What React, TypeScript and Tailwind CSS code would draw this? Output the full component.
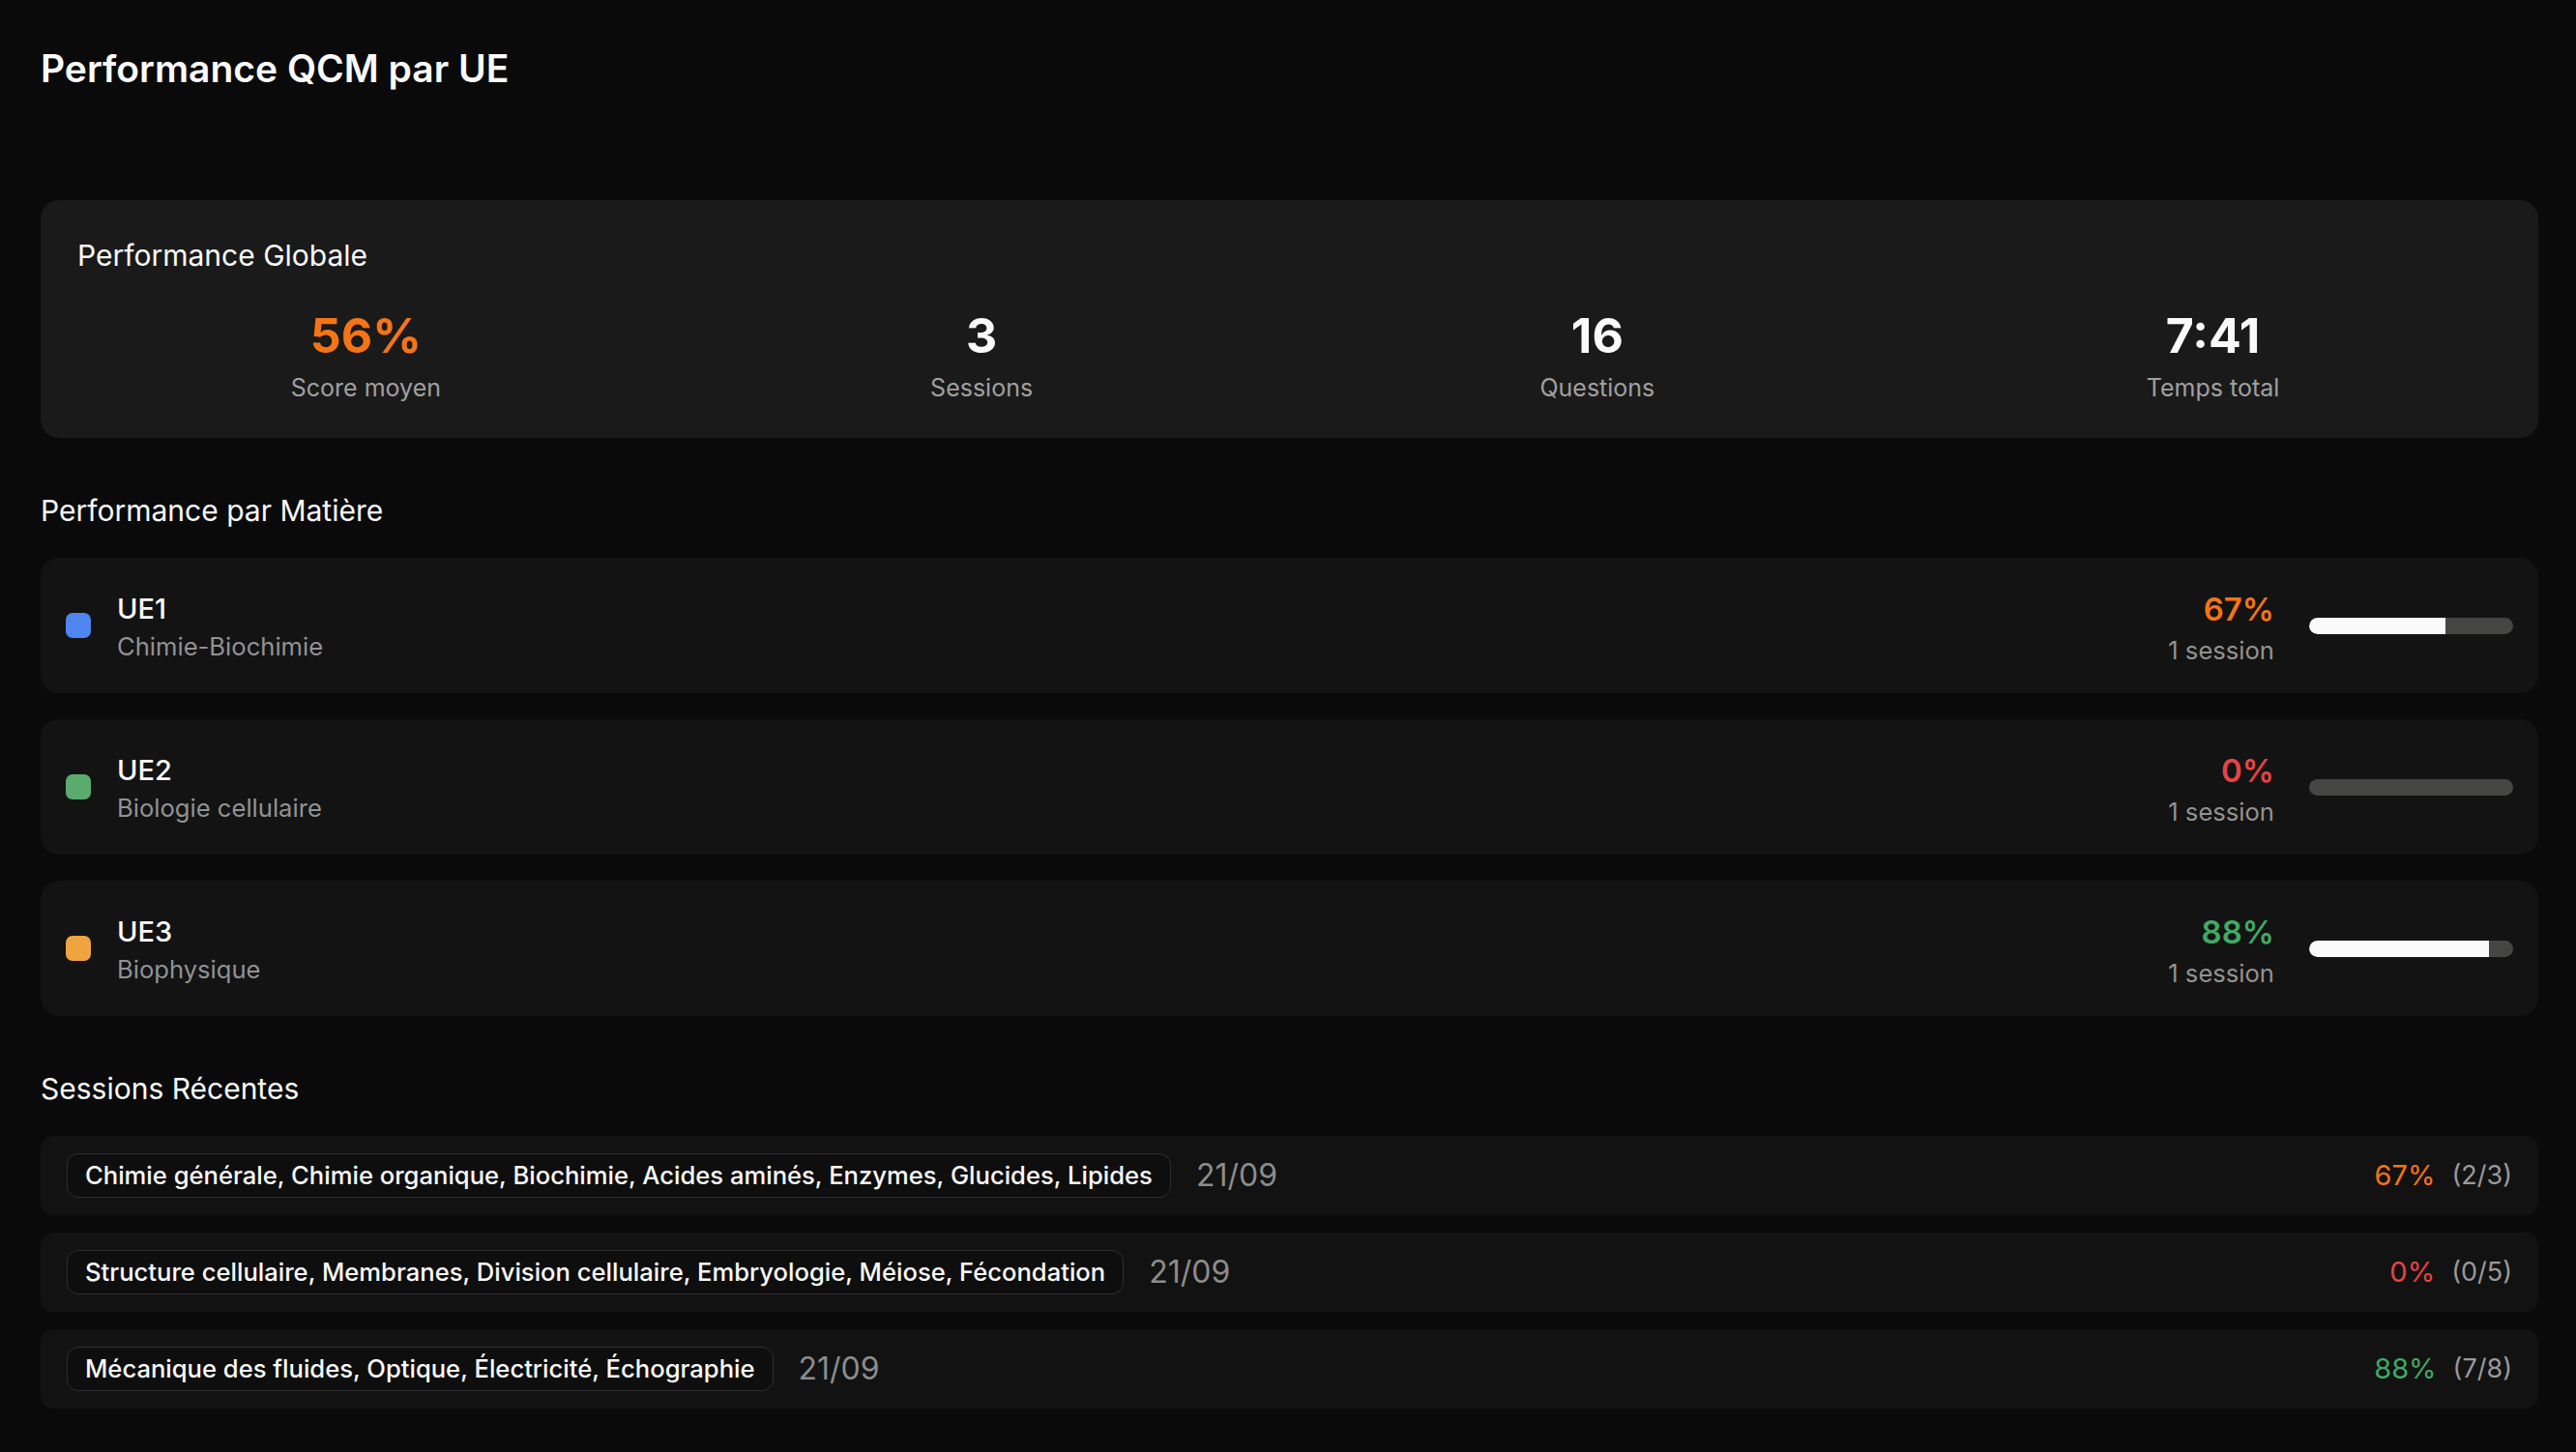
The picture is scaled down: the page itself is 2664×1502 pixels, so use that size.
import React from "react";

type Subject = { code: string; name: string; dot: string; pct: number; color: string; sessions: string };
type Session = { topics: string; date: string; pct: number; color: string; ratio: string };

const subjects: Subject[] = [
  { code: "UE1", name: "Chimie-Biochimie", dot: "bg-[#4e85ee]", pct: 67, color: "text-[#f47416]", sessions: "1 session" },
  { code: "UE2", name: "Biologie cellulaire", dot: "bg-[#5aab6e]", pct: 0, color: "text-[#e54444]", sessions: "1 session" },
  { code: "UE3", name: "Biophysique", dot: "bg-[#eea540]", pct: 88, color: "text-[#41a964]", sessions: "1 session" },
];

const sessions: Session[] = [
  { topics: "Chimie générale, Chimie organique, Biochimie, Acides aminés, Enzymes, Glucides, Lipides", date: "21/09", pct: 67, color: "text-[#f47416]", ratio: "(2/3)" },
  { topics: "Structure cellulaire, Membranes, Division cellulaire, Embryologie, Méiose, Fécondation", date: "21/09", pct: 0, color: "text-[#e54444]", ratio: "(0/5)" },
  { topics: "Mécanique des fluides, Optique, Électricité, Échographie", date: "21/09", pct: 88, color: "text-[#41a964]", ratio: "(7/8)" },
];

const stats = [
  { value: "56%", label: "Score moyen", color: "text-[#f47416]" },
  { value: "3", label: "Sessions", color: "text-[#fafafa]" },
  { value: "16", label: "Questions", color: "text-[#fafafa]" },
  { value: "7:41", label: "Temps total", color: "text-[#fafafa]" },
];

function SubjectRow({ s }: { s: Subject }) {
  return (
    <div className="flex h-[140px] items-center justify-between rounded-[19px] bg-[#131313] px-[26px]">
      <div className="flex items-center gap-[27px]">
        <span className={`h-[26px] w-[26px] rounded-[7px] ${s.dot}`} />
        <div className="flex flex-col gap-[4px] pt-[3px]">
          <span className="text-[29px] font-medium leading-[36px] text-[#fafafa]">{s.code}</span>
          <span className="text-[25.6px] leading-[34px] text-[#929292]">{s.name}</span>
        </div>
      </div>
      <div className="flex items-center gap-[36px]">
        <div className="flex flex-col items-end gap-[6px] pt-[6px]">
          <span className={`text-[33px] font-semibold leading-[40px] ${s.color}`}>{s.pct}%</span>
          <span className="text-[25.6px] leading-[34px] text-[#929292]">{s.sessions}</span>
        </div>
        <div className="h-[17px] w-[211px] overflow-hidden rounded-full bg-[#454543]">
          <div className="h-full rounded-l-full bg-[#fafafa]" style={{ width: `${s.pct}%` }} />
        </div>
      </div>
    </div>
  );
}

function SessionRow({ s }: { s: Session }) {
  return (
    <div className="flex h-[82px] items-center justify-between rounded-[13px] bg-[#121212] px-[27px]">
      <div className="flex items-center gap-[26px]">
        <span className="rounded-[12px] border border-[#2e2e2e] bg-[#0e0e0e] px-[18px] py-[4px] text-[25.6px] font-medium leading-[36px] text-[#fafafa]">
          {s.topics}
        </span>
        <span className="text-[32px] leading-[40px] text-[#8c8c8c]">{s.date}</span>
      </div>
      <div className="flex items-center gap-[17px]">
        <span className={`text-[29px] leading-[40px] ${s.color}`}>{s.pct}%</span>
        <span className="text-[27px] leading-[40px] text-[#9a9a9a]">{s.ratio}</span>
      </div>
    </div>
  );
}

export default function App() {
  return (
    <div className="min-h-screen bg-[#0a0a0a] pb-[40px] pl-[42px] pr-[39px] pt-[47px] font-['Inter',sans-serif] text-[#fafafa]">
      <h1 className="text-[39px] font-semibold leading-[48px]">Performance QCM par UE</h1>

      <section className="mt-[112px] rounded-[19px] bg-[#1a1a1a] px-[38px] pb-[34px] pt-[37px]">
        <h2 className="text-[30px] leading-[40px]">Performance Globale</h2>
        <div className="mt-[33px] grid grid-cols-4 gap-[40px]">
          {stats.map((st) => (
            <div key={st.label} className="flex flex-col items-center gap-[6px]">
              <span className={`text-[50px] font-bold leading-[60px] ${st.color}`}>{st.value}</span>
              <span className="text-[25px] leading-[36px] text-[#a0a0a0]">{st.label}</span>
            </div>
          ))}
        </div>
      </section>

      <h2 className="mt-[55px] text-[30px] leading-[40px]">Performance par Matière</h2>
      <div className="mt-[29px] flex flex-col gap-[27px]">
        {subjects.map((s) => (
          <SubjectRow key={s.code} s={s} />
        ))}
      </div>

      <h2 className="mt-[55px] text-[30px] leading-[40px]">Sessions Récentes</h2>
      <div className="mt-[29px] flex flex-col gap-[18px]">
        {sessions.map((s) => (
          <SessionRow key={s.topics} s={s} />
        ))}
      </div>
    </div>
  );
}
